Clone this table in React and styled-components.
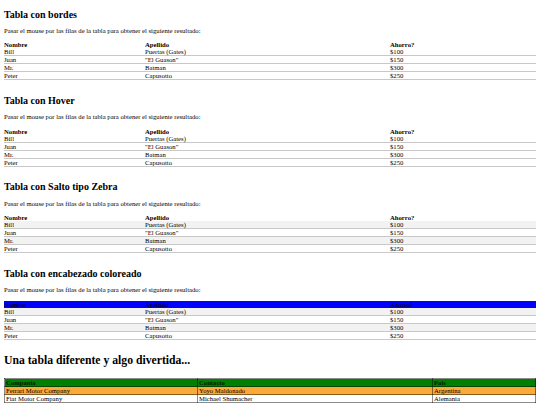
import React from "react";
import styled, { createGlobalStyle } from "styled-components";

const Global = createGlobalStyle`
  html, body { margin: 0; padding: 0; background: #fff; }
  body {
    font-family: "Liberation Serif", "Times New Roman", serif;
    font-size: 6.67px;
    color: #000;
  }
`;

const Page = styled.main`
  display: flex;
  flex-direction: column;
  padding: 8.5px 4px 0 4px;
`;

const Section = styled.section`
  display: flex;
  flex-direction: column;
`;

const Title = styled.h2`
  font-size: 10px;
  font-weight: bold;
  line-height: 11px;
  margin: 0 0 7.3px 0;
`;

const BigTitle = styled.h1`
  font-size: 11.7px;
  font-weight: bold;
  line-height: 13.4px;
  margin: 0 0 10.5px 0;
`;

const Text = styled.p`
  margin: 0 0 6.9px 0;
  line-height: 7.67px;
`;

const Table = styled.table`
  width: 100%;
  border-collapse: collapse;
  table-layout: fixed;
  font-size: 6.67px;
  margin-bottom: 14.6px;
`;

const Col = styled.col`
  width: ${(p) => p.$w}px;
`;

const HeadCell = styled.th`
  text-align: left;
  padding: 0;
  line-height: 7px;
  font-weight: ${(p) => (p.$plain ? "normal" : "bold")};
  background: ${(p) => p.$bg || "transparent"};
  color: #000;
`;

const Row = styled.tr`
  background: ${(p) => (p.$zebra ? "#f2f2f2" : "transparent")};
`;

const Cell = styled.td`
  padding: 0;
  line-height: 7px;
  border-bottom: 1px solid #c8c8c8;
`;

const FunTable = styled.table`
  width: 100%;
  border-collapse: collapse;
  table-layout: fixed;
  font-size: 6.67px;
`;

const FunHead = styled.th`
  text-align: left;
  font-weight: bold;
  padding: 0 0 0 1px;
  line-height: 7px;
  background: #008000;
  color: #031a03;
  border: 1px solid rgba(0, 0, 0, 0.45);
`;

const FunRow = styled.tr`
  background: ${(p) => (p.$hl ? "#fbaa3a" : "#fff")};
`;

const FunCell = styled.td`
  padding: 0 0 0 1px;
  line-height: 7px;
  border: 1px solid rgba(0, 0, 0, 0.45);
`;

const people = [
  ["Bill", "Puertas (Gates)", "$100"],
  ["Juan", "\"El Guason\"", "$150"],
  ["Mr.", "Batman", "$300"],
  ["Peter", "Capusotto", "$250"],
];

const companies = [
  ["Ferrari Motor Company", "Yoyo Maldonado", "Argentina"],
  ["Fiat Motor Company", "Michael Shumacher", "Alemania"],
];

const intro =
  "Pasar el mouse por las filas de la tabla para obtener el siguiente resultado:";

function PeopleTable({ zebra, headBg }) {
  return (
    <Table>
      <colgroup>
        <Col $w={141} />
        <Col $w={245} />
        <Col />
      </colgroup>
      <thead>
        <tr>
          {["Nombre", "Apellido", "Ahorro?"].map((h) => (
            <HeadCell key={h} $bg={headBg} $plain={!!headBg}>
              {h}
            </HeadCell>
          ))}
        </tr>
      </thead>
      <tbody>
        {people.map((r, i) => (
          <Row key={r[0]} $zebra={zebra && i % 2 === 0}>
            {r.map((c) => (
              <Cell key={c}>{c}</Cell>
            ))}
          </Row>
        ))}
      </tbody>
    </Table>
  );
}

export default function App() {
  return (
    <>
      <Global />
      <Page>
        <Section>
          <Title>Tabla con bordes</Title>
          <Text>{intro}</Text>
          <PeopleTable />
        </Section>
        <Section>
          <Title>Tabla con Hover</Title>
          <Text>{intro}</Text>
          <PeopleTable />
        </Section>
        <Section>
          <Title>Tabla con Salto tipo Zebra</Title>
          <Text>{intro}</Text>
          <PeopleTable zebra />
        </Section>
        <Section>
          <Title>Tabla con encabezado coloreado</Title>
          <Text>{intro}</Text>
          <PeopleTable zebra headBg="#0000ff" />
        </Section>
        <Section>
          <BigTitle>Una tabla diferente y algo divertida...</BigTitle>
          <FunTable>
            <colgroup>
              <Col $w={193} />
              <Col $w={235} />
              <Col />
            </colgroup>
            <thead>
              <tr>
                <FunHead>Compania</FunHead>
                <FunHead>Contacto</FunHead>
                <FunHead>Pais</FunHead>
              </tr>
            </thead>
            <tbody>
              {companies.map((r, i) => (
                <FunRow key={r[0]} $hl={i === 0}>
                  {r.map((c) => (
                    <FunCell key={c}>{c}</FunCell>
                  ))}
                </FunRow>
              ))}
            </tbody>
          </FunTable>
        </Section>
      </Page>
    </>
  );
}
